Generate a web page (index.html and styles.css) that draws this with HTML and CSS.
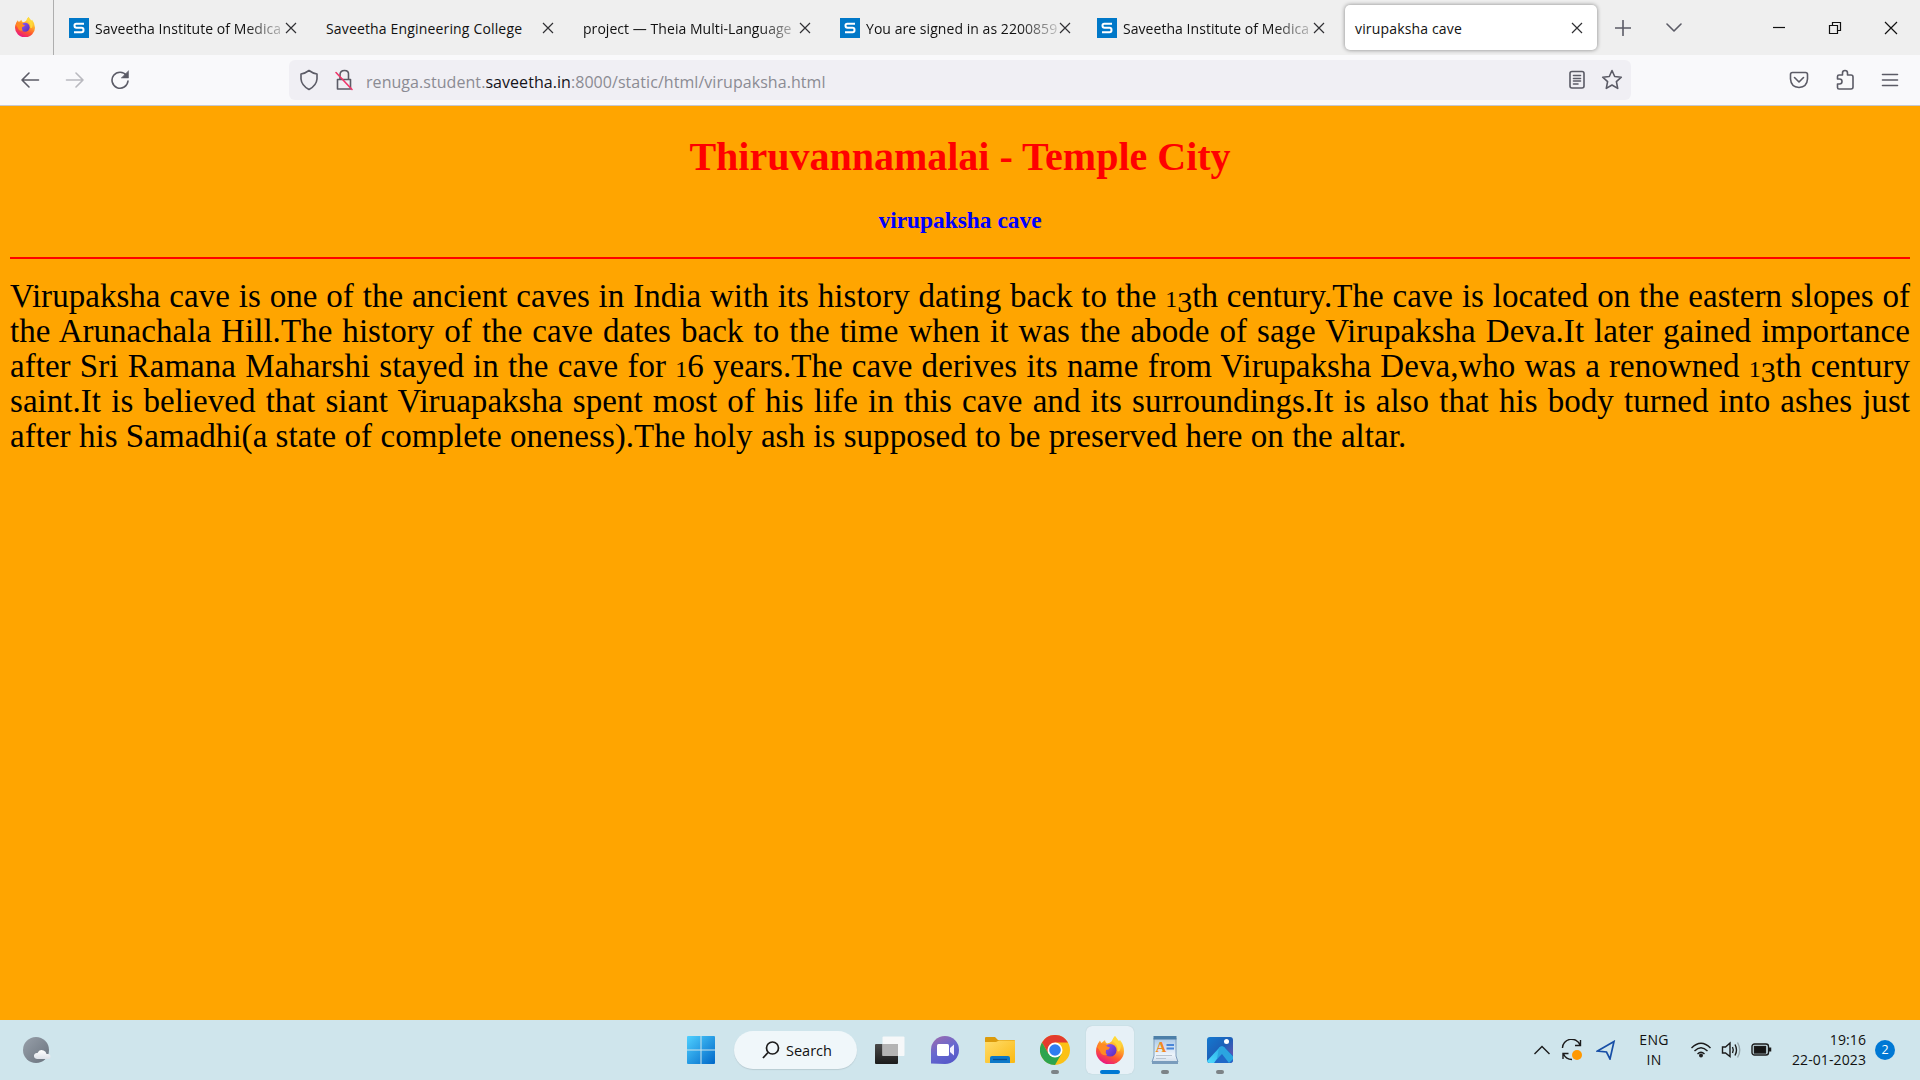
FILE: index.html
```html
<!DOCTYPE html>
<html lang="en">
<head>
<meta charset="utf-8">
<title>virupaksha cave</title>
<link rel="stylesheet" href="styles.css">
</head>
<body>
<svg width="0" height="0" class="defs">
  <defs>
    <linearGradient id="ffBody" x1="0.8" y1="0" x2="0.3" y2="1"><stop offset="0" stop-color="#fff44f"/><stop offset="0.35" stop-color="#ffb02a"/><stop offset="0.65" stop-color="#ff5a2c"/><stop offset="1" stop-color="#e8108a"/></linearGradient>
    <linearGradient id="ffGlobe" x1="0" y1="0" x2="1" y2="1"><stop offset="0" stop-color="#9059ff"/><stop offset="1" stop-color="#5a2bb5"/></linearGradient>
    <linearGradient id="win" x1="0" y1="0" x2="1" y2="1"><stop offset="0" stop-color="#4fd0ff"/><stop offset="1" stop-color="#0067c8"/></linearGradient>
    <linearGradient id="chat" x1="0.2" y1="0" x2="0.7" y2="1"><stop offset="0" stop-color="#9a6bb0"/><stop offset="0.5" stop-color="#6668d0"/><stop offset="1" stop-color="#5557c8"/></linearGradient>
    <linearGradient id="folder" x1="0" y1="0" x2="1" y2="1"><stop offset="0" stop-color="#ffdc6b"/><stop offset="1" stop-color="#fbb911"/></linearGradient>
    <linearGradient id="dark" x1="0" y1="0" x2="0" y2="1"><stop offset="0" stop-color="#4a4a4a"/><stop offset="1" stop-color="#1b1b1b"/></linearGradient>
    <linearGradient id="photo" x1="0" y1="0" x2="1" y2="1"><stop offset="0" stop-color="#1479cf"/><stop offset="0.5" stop-color="#1d5fb8"/><stop offset="1" stop-color="#8050b0"/></linearGradient>
    <linearGradient id="hill" x1="0" y1="1" x2="1" y2="0"><stop offset="0" stop-color="#50dcff"/><stop offset="1" stop-color="#22a8e4"/></linearGradient>
    <linearGradient id="moon" x1="0" y1="0" x2="1" y2="1"><stop offset="0" stop-color="#98a0aa"/><stop offset="1" stop-color="#69727d"/></linearGradient>
    <linearGradient id="cloud" x1="0" y1="0" x2="0" y2="1"><stop offset="0" stop-color="#ffffff"/><stop offset="1" stop-color="#dde1e8"/></linearGradient>
    <linearGradient id="pad" x1="0" y1="0" x2="0" y2="1"><stop offset="0" stop-color="#a9c8e6"/><stop offset="0.7" stop-color="#edf4fb"/><stop offset="1" stop-color="#d2deea"/></linearGradient>
    <symbol id="firefox" viewBox="0 0 28 28">
      <path d="M1 10 Q2 7 3 6 L4 4.500 Q4.500 6 5.500 7 L9 4 Q9 6 11 7.500 Q14 7 16 5 Q17 2 19 0 Q20 4 23 5 L24 4 Q28 9 28 15 A14 13.500 0 0 1 0 15 Q0 12 1 10Z" fill="url(#ffBody)"/>
      <circle cx="14.200" cy="14.300" r="6.300" fill="url(#ffGlobe)"/>
      <path d="M1 11 Q4 7 10 8 Q9 10 14 11.500 Q13 14 10 14 Q9 17 11 19 Q5 20 4 15Z" fill="#ff8a22"/>
      <path d="M16 5 Q22 8 21.500 15 Q24 17 25 10 Q24 6 19 0 Q17 2 16 5Z" fill="#ffd83a"/>
    </symbol>
    <symbol id="close" viewBox="0 0 12 12"><path d="M1 1 11 11 M11 1 1 11" fill="none" stroke="#303034" stroke-width="1.200"/></symbol>
    <symbol id="favicon" viewBox="0 0 20 20"><rect width="20" height="20" fill="#0078c8"/><path d="M15 5.800 H7.200 Q5.500 5.800 5.500 7.600 Q5.500 9.800 7.500 9.800 H12.600 Q14.500 9.800 14.500 12 Q14.500 14.300 12.500 14.300 H5" fill="none" stroke="#fff" stroke-width="2"/></symbol>
  </defs>
</svg>

<header class="browser">
  <div class="tabbar">
    <div class="pinned"><svg width="20" height="20"><use href="#firefox"/></svg></div>
    <div class="tabs">
      <div class="tab"><svg class="fav" width="20" height="20"><use href="#favicon"/></svg><span class="title fade">Saveetha Institute of Medica</span><svg class="x" width="12" height="12"><use href="#close"/></svg></div>
      <div class="tab"><span class="title">Saveetha Engineering College</span><svg class="x" width="12" height="12"><use href="#close"/></svg></div>
      <div class="tab"><span class="title fade">project — Theia Multi-Language</span><svg class="x" width="12" height="12"><use href="#close"/></svg></div>
      <div class="tab"><svg class="fav" width="20" height="20"><use href="#favicon"/></svg><span class="title fade">You are signed in as 2200859</span><svg class="x" width="12" height="12"><use href="#close"/></svg></div>
      <div class="tab"><svg class="fav" width="20" height="20"><use href="#favicon"/></svg><span class="title fade">Saveetha Institute of Medica</span><svg class="x" width="12" height="12"><use href="#close"/></svg></div>
      <div class="tab active"><span class="title">virupaksha cave</span><svg class="x" width="12" height="12"><use href="#close"/></svg></div>
    </div>
    <div class="tabtools">
      <svg width="16" height="16" class="line"><path d="M8 .5V15.500M.5 8H15.500"/></svg>
      <svg width="16" height="16" class="line"><path d="M1 4 8 11 15 4"/></svg>
    </div>
    <div class="window">
      <svg width="14" height="14"><path d="M1 6.500H13"/></svg>
      <svg width="14" height="14"><path d="M1.500 4.500H9.500V12.500H1.500ZM4.500 4.500V1.500H12.500V9.500H9.500"/></svg>
      <svg width="14" height="14"><path d="M1 1 13 13M13 1 1 13"/></svg>
    </div>
  </div>
  <div class="toolbar">
    <div class="nav">
      <svg width="20" height="20" class="line"><path d="M18.500 10H2M9 3 2 10 9 17"/></svg>
      <svg width="20" height="20" class="line dim"><path d="M1.500 10H18M11 3 18 10 11 17"/></svg>
      <svg width="20" height="20" class="line"><path d="M16.500 5.500A8 8 0 1 0 18 11"/><path d="M18.500 1V8H11.500Z" class="solid"/></svg>
    </div>
    <div class="url">
      <svg width="20" height="22" class="line"><path d="M10 1.500 Q14 4.500 18 5 V10 Q17.500 16.500 10 20.500 Q2.500 16.500 2 10 V5 Q6 4.500 10 1.500Z"/></svg>
      <svg width="20" height="22" class="line"><path d="M3.500 10.500H16.500V20H3.500ZM6 10.500V6Q6 1.500 10.500 1.500T14.500 6V10.500"/><path d="M2 3.500 18 20.500" class="strike"/></svg>
      <span class="address">renuga.student.<b>saveetha.in</b>:8000/static/html/virupaksha.html</span>
      <svg width="18" height="20" class="line reader"><rect x="2" y="1.500" width="14" height="16.500" rx="2"/><path d="M5.500 5.500H12.500M5.500 8.500H12.500M5.500 11H12.500M5.500 14H10"/></svg>
      <svg width="22" height="22" class="line"><path d="M11 1.500 13.700 7.500 20.300 8.200 15.400 12.700 16.700 19.400 11 16 5.300 19.400 6.600 12.700 1.700 8.200 8.300 7.500Z"/></svg>
    </div>
    <div class="actions">
      <svg width="20" height="20" class="line"><path d="M3.500 2.500H16.500Q18.500 2.500 18.500 4.500V9Q18 17 10 17.500Q2 17 1.500 9V4.500Q1.500 2.500 3.500 2.500ZM5.500 7.500 10 12 14.500 7.500"/></svg>
      <svg width="20" height="22" class="line"><path d="M7.500 6V4Q7.500 1.500 10 1.500T12.500 4V6H16Q18 6 18 8V18Q18 20 16 20H4Q2.500 20 2.500 18.500V15H4.500Q7 15 7 12.500T4.500 10H2.500V7.500Q2.500 6 4 6Z"/></svg>
      <svg width="18" height="16" class="line"><path d="M1.500 2.500H16.500M1.500 8H16.500M1.500 13.500H16.500"/></svg>
    </div>
  </div>
</header>

<main class="page">
  <h1>Thiruvannamalai - Temple City</h1>
  <h3>virupaksha cave</h3>
  <hr>
  <p>
    <span class="row">Virupaksha cave is one of the ancient caves in India with its history dating back to the <i class="one">1</i><i class="three">3</i>th century.The cave is located on the eastern slopes of</span>
    <span class="row">the Arunachala Hill.The history of the cave dates back to the time when it was the abode of sage Virupaksha Deva.It later gained importance</span>
    <span class="row">after Sri Ramana Maharshi stayed in the cave for <i class="one">1</i>6 years.The cave derives its name from Virupaksha Deva,who was a renowned <i class="one">1</i><i class="three">3</i>th century</span>
    <span class="row">saint.It is believed that siant Viruapaksha spent most of his life in this cave and its surroundings.It is also that his body turned into ashes just</span>
    <span class="row last">after his Samadhi(a state of complete oneness).The holy ash is supposed to be preserved here on the altar.</span>
  </p>
</main>

<footer class="taskbar">
  <svg class="weather" width="30" height="28"><circle cx="14" cy="14" r="13" fill="url(#moon)"/><path d="M15 23Q11.500 22.500 12 19Q13 16.500 15.500 17Q17.500 12.500 21.500 14.500Q24 15 24.500 18Q28.500 17.500 28.500 20.500Q28.500 23 26 23Z" fill="url(#cloud)"/></svg>
  <div class="apps">
    <div class="start"><svg width="30" height="30"><path d="M1 2Q1 1 2 1H14.500V14.500H1ZM15.500 1H28Q29 1 29 2V14.500H15.500ZM1 15.500H14.500V29H2Q1 29 1 28ZM15.500 15.500H29V28Q29 29 28 29H15.500Z" fill="url(#win)"/></svg></div>
    <div class="search"><svg width="18" height="18"><circle cx="10.500" cy="7" r="6" fill="none" stroke="#1c1c1c" stroke-width="1.700"/><path d="M6 11.500 1 17" stroke="#1c1c1c" stroke-width="1.800"/></svg><span>Search</span></div>
    <div class="app"><svg width="32" height="30"><rect x="1" y="9" width="23" height="20" rx="1" fill="url(#dark)"/><rect x="8.500" y="1.500" width="22" height="19.500" rx="1" fill="#fafafa" opacity=".92"/><rect x="8.500" y="9" width="15.500" height="12" fill="#b4b4b4"/></svg></div>
    <div class="app"><svg width="30" height="30"><path d="M1 28.500V15A14 14 0 1 1 15 29Z" fill="url(#chat)"/><rect x="7" y="9" width="12" height="12" rx="1.500" fill="#fff"/><path d="M20 13 24 9.500V20.500L20 17Z" fill="#f1efff"/></svg></div>
    <div class="app"><svg width="32" height="30"><path d="M1 3Q1 2 2 2H11L14 5H30Q31 5 31 6V14H1Z" fill="#dc9b0c"/><path d="M1 7H12L15 5.500H31V27Q31 28 30 28H2Q1 28 1 27Z" fill="url(#folder)"/><path d="M6 28V23Q6 21 8 21H24Q26 21 26 23V28Z" fill="#0c78c8"/><path d="M9 24.500H23" stroke="#074d91" stroke-width="1.300"/></svg></div>
    <div class="app run"><svg width="30" height="30" viewBox="0 0 30 30"><circle cx="15" cy="15" r="15" fill="#fbc116"/><path d="M15 7.500H28A15 15 0 0 0 2 7.500L8.500 18.700 15 15Z" fill="#e33b2e"/><path d="M2 7.500A15 15 0 0 0 15 30L21.500 18.700 15 22 8.500 18.700Z" fill="#2da44e"/><circle cx="15" cy="15" r="7.500" fill="#fff"/><circle cx="15" cy="15" r="5.800" fill="#2f7df0"/></svg></div>
    <div class="app run current"><svg width="28" height="28"><use href="#firefox"/></svg></div>
    <div class="app run"><svg width="28" height="30"><path d="M3 3H25V21L27 27H1L3 21Z" fill="url(#pad)" stroke="#7f9dbd"/><path d="M2.500 1H25.500V4.500H2.500Z" fill="#4c7fa8"/><path d="M1 26H27V29H1Z" fill="#7a9cbc"/><text x="4.500" y="17" class="letter">A</text><path d="M15.500 10H23M15.500 13.500H23" stroke="#4b86d8" stroke-width="2"/><path d="M5 20.500H21M5 23.500H15" stroke="#b9c4d0"/></svg></div>
    <div class="app run"><svg width="26" height="26"><clipPath id="pc"><rect width="26" height="26" rx="3"/></clipPath><g clip-path="url(#pc)"><rect width="26" height="26" fill="url(#photo)"/><path d="M0 26 14 10.500Q16 8.500 18 10.500L30 23V26Z" fill="#2069c8"/><path d="M0 24 12 11Q15 8 18 11L7 26H0Z" fill="url(#hill)"/><path d="M12 10.500Q15 8 17.500 10.500L26 19.500V22L22 26 15 17 10 22Z" fill="#2ba5e0"/><circle cx="19.500" cy="4.500" r="2.500" fill="#fff"/></g></svg></div>
  </div>
  <div class="tray">
    <svg width="18" height="12" class="ink"><path d="M1.500 10 9 2.500 16.500 10"/></svg>
    <svg width="22" height="22" class="ink sync"><path d="M1.500 9A9 8.500 0 0 1 19 6M19.500 1V6.500H14M11 20.500Q5 20.500 2.500 15M2 20V14.500H7.500"/><circle cx="16" cy="16" r="5" fill="#ff9800" stroke="none"/></svg>
    <svg width="20" height="20" class="ink loc"><path d="M1.500 11 18 1.500 14 19 10.500 12Z"/></svg>
    <div class="lang"><span>ENG</span><span>IN</span></div>
    <svg width="22" height="16" class="ink wifi"><path d="M1.500 6Q11-3.500 20.500 6M4.500 9Q11 2.500 17.500 9M7.500 12Q11 8.500 14.500 12"/><circle cx="11" cy="13.500" r="2" fill="#222" stroke="none"/></svg>
    <svg width="20" height="18" class="ink snd"><path d="M1.500 6H4.500L9 2V15.500L4.500 12H1.500ZM11.500 6Q13 9 11.500 12M14 3.500Q17 9 14 14.500"/><path d="M16.500 1.500Q21 9 16.500 16.500" opacity=".3"/></svg>
    <svg width="21" height="14" class="ink bat"><rect x="1" y="1" width="16.500" height="11" rx="2.500"/><rect x="3.500" y="3.500" width="11" height="6.500" fill="#151515"/><path d="M19 4.500V8.500" stroke-width="2.500"/></svg>
    <div class="clock"><span>19:16</span><span>22-01-2023</span></div>
    <span class="badge">2</span>
  </div>
</footer>
</body>
</html>
```
FILE: styles.css
```css
* { box-sizing: border-box; }
body {
  margin: 0;
  width: 1920px;
  height: 1080px;
  display: flex;
  flex-direction: column;
  overflow: hidden;
  font-family: "Open Sans", "Noto Sans", sans-serif;
  color: #111;
}
svg { display: block; flex: none; }

.browser { height: 106px; border-bottom: 1px solid #c6c8d0; background: #f9f9fb; }
.tabbar { height: 55px; display: flex; background: #efefef; }
.pinned { width: 54px; border-right: 1px solid #aeaeae; padding: 17px 0 0 15px; }
.tabs { display: flex; padding-left: 5px; }
.tab { width: 257px; height: 55px; padding: 0 18px 0 10px; display: flex; align-items: center; }
.fav { margin: 1px 6px 0 0; }
.title { flex: 1; font-size: 14px; line-height: 20px; letter-spacing: 0.16px; white-space: nowrap; padding-top: 2px; height: 22px; }
.fade { letter-spacing: 0.05px; -webkit-mask-image: linear-gradient(90deg, #000 calc(100% - 38px), rgba(0, 0, 0, .2)); mask-image: linear-gradient(90deg, #000 calc(100% - 38px), rgba(0, 0, 0, .2)); }
.x { margin-left: 2px; margin-right: 1px; }
.active { width: 252px; height: 45px; margin: 5px 0 0 1px; padding: 0 13px 0 10px; background: #fff; border-radius: 5px; box-shadow: 0 0 4px rgba(0, 0, 0, .45); }
.tabtools { display: flex; align-items: center; gap: 35px; margin-left: 18px; }
.line { fill: none; stroke: #5b5b66; stroke-width: 1.6; stroke-linejoin: round; stroke-linecap: round; }
.window { display: flex; align-items: center; gap: 42px; margin-left: auto; padding-right: 22px; }
.window svg { fill: none; stroke: #111; stroke-width: 1.2; }

.toolbar { height: 50px; display: flex; align-items: center; }
.nav { width: 289px; display: flex; gap: 25px; padding-left: 20px; }
.nav .dim { opacity: .4; }
.solid { fill: #5b5b66; stroke-width: .5; }
.url { width: 1342px; height: 40px; border-radius: 6px; background: #f0eff4; display: flex; align-items: center; padding: 0 8px 0 10px; }
.url svg + svg { margin-left: 15px; }
.url .strike { stroke: #f0356a; }
.address { flex: 1; margin-left: 12px; padding-top: 3px; font-size: 16px; color: #8b8b93; letter-spacing: 0.055px; white-space: nowrap; }
.address b { font-weight: 400; color: #15141a; }
.actions { display: flex; align-items: center; gap: 26px; margin-left: auto; padding-right: 21px; }

.page { height: 914px; background: #ffa500; padding: 0 10px; overflow: hidden; font-family: "Liberation Serif", serif; }
h1 { margin: 28px 0 0; font-size: 40px; line-height: 46px; text-align: center; color: #f00; }
h3 { margin: 27px 0 0; font-size: 23.4px; line-height: 27px; text-align: center; color: #00f; }
hr { margin: 23px 0 0; border: 0; height: 2px; background: #f00; }
p { margin: 20px 0 0; color: #000; font-size: 33px; line-height: 35px; }
.row { display: block; height: 35px; white-space: nowrap; text-align: justify; text-align-last: justify; letter-spacing: .04px; }
.last { text-align-last: left; }
.one, .three { font-style: normal; line-height: 0; }
.one { font-size: 24px; }
.three { font-size: 30px; vertical-align: -5px; }

.taskbar { height: 60px; background: #cfe5ec; display: grid; grid-template-columns: 674px 600px 1fr; align-items: center; }
.weather { margin-left: 22px; }
.apps { display: flex; align-items: center; }
.start { width: 60px; padding-left: 12px; }
.search { width: 123px; height: 38px; margin-right: 9px; border-radius: 19px; background: #f0f7fa; box-shadow: 0 1px 1px #b9ccd3; display: flex; align-items: center; gap: 6px; padding-left: 28px; font-size: 14.5px; }
.app { width: 48px; height: 48px; margin-right: 7px; display: grid; place-items: center; border-radius: 6px; position: relative; }
.run::after { content: ""; position: absolute; left: 20px; bottom: 0; width: 8px; height: 4px; border-radius: 2px; background: #7c8387; }
.current { background: #e7f1f7; box-shadow: 0 0 1px #a9bcc4; }
.current::after { left: 14px; width: 20px; background: #0078d4; }
.letter { font: bold 15px "Liberation Serif", serif; fill: #f28a24; }
.defs { position: absolute; }
.tray { display: flex; align-items: center; padding-right: 25px; justify-content: flex-end; font-size: 14px; line-height: 20px; }
.ink { fill: none; stroke: #1b1b1b; stroke-width: 1.4; }
.sync { margin-left: 10px; }
.loc { margin-left: 13px; stroke: #174ea6; stroke-width: 1.7; }
.lang { width: 40px; margin: 0 16px 0 18px; display: flex; flex-direction: column; align-items: center; letter-spacing: .3px; }
.snd { margin-left: 9px; }
.bat { margin-left: 10px; }
.clock { width: 80px; margin: 0 9px 0 14px; display: flex; flex-direction: column; align-items: flex-end; white-space: nowrap; letter-spacing: .1px; }
.badge { width: 20px; height: 20px; border-radius: 50%; background: #0078d4; color: #fff; text-align: center; font-size: 12.5px; }
```
